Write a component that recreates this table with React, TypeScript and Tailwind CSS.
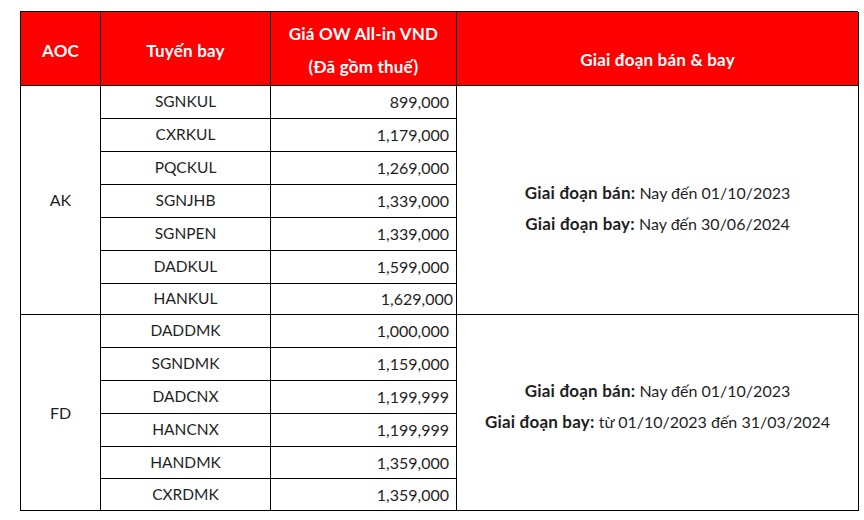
const akRoutes = [
  { route: 'SGNKUL', price: '899,000', h: 'h-[33px]' },
  { route: 'CXRKUL', price: '1,179,000', h: 'h-[33px]' },
  { route: 'PQCKUL', price: '1,269,000', h: 'h-[33px]' },
  { route: 'SGNJHB', price: '1,339,000', h: 'h-[33px]' },
  { route: 'SGNPEN', price: '1,339,000', h: 'h-[33px]' },
  { route: 'DADKUL', price: '1,599,000', h: 'h-[33px]' },
  { route: 'HANKUL', price: '1,629,000', h: 'h-[31px]', shift: true },
];

const fdRoutes = [
  { route: 'DADDMK', price: '1,000,000', h: 'h-[33px]' },
  { route: 'SGNDMK', price: '1,159,000', h: 'h-[33px]' },
  { route: 'DADCNX', price: '1,199,999', h: 'h-[33px]' },
  { route: 'HANCNX', price: '1,199,999', h: 'h-[33px]' },
  { route: 'HANDMK', price: '1,359,000', h: 'h-[32px]' },
  { route: 'CXRDMK', price: '1,359,000', h: 'h-[32px]' },
];

const cell = 'border-r border-b border-black flex items-center';
const bold = 'font-bold text-[17px] tracking-[0.2px]';
const head = `${cell} h-[74px] bg-[#ff0000] text-white ${bold}`;

function Group({
  aoc,
  rows,
  sale,
  fly,
  textPad,
}: {
  aoc: string;
  rows: { route: string; price: string; h: string; shift?: boolean }[];
  sale: string;
  fly: string;
  textPad: string;
}) {
  const span = rows.length === 7 ? 'row-span-7' : 'row-span-6';
  return (
    <>
      <div className={`${cell} ${span} justify-center`}>{aoc}</div>
      {rows.map((r, i) => (
        <div key={r.route} className="contents">
          <div className={`${cell} ${r.h} justify-center text-[15.5px]`}>{r.route}</div>
          <div className={`${cell} ${r.h} justify-end ${r.shift ? 'pr-[3px]' : 'pr-[7px]'}`}>{r.price}</div>
          {i === 0 && (
            <div className={`${cell} ${span} flex-col justify-center leading-[31px] ${textPad}`}>
              <div>
                <span className={bold}>Giai đoạn bán:</span> {sale}
              </div>
              <div>
                <span className={bold}>Giai đoạn bay:</span> {fly}
              </div>
            </div>
          )}
        </div>
      ))}
    </>
  );
}

export default function App() {
  return (
    <div className="w-[864px] h-[520px] bg-white pt-[11px] pl-[20px] font-['Lato',sans-serif] text-[16px] text-[#1f1f1f]">
      <div className="grid w-[838px] grid-cols-[80px_170px_186px_402px] border-l border-t border-black">
        {/* Header */}
        <div className={`${head} justify-center pt-[4px]`}>AOC</div>
        <div className={`${head} justify-center pt-[4px]`}>Tuyến bay</div>
        <div className={`${head} flex-col justify-center pt-[2px] leading-[33px]`}>
          <span>Giá OW All-in VND</span>
          <span>(Đã gồm thuế)</span>
        </div>
        <div className={`${head} justify-center pt-[22px]`}>Giai đoạn bán &amp; bay</div>

        <Group aoc="AK" rows={akRoutes} sale="Nay đến 01/10/2023" fly="Nay đến 30/06/2024" textPad="pt-[16px]" />
        <Group
          aoc="FD"
          rows={fdRoutes}
          sale="Nay đến 01/10/2023"
          fly="từ 01/10/2023 đến 31/03/2024"
          textPad="pb-[14px]"
        />
      </div>
    </div>
  );
}
